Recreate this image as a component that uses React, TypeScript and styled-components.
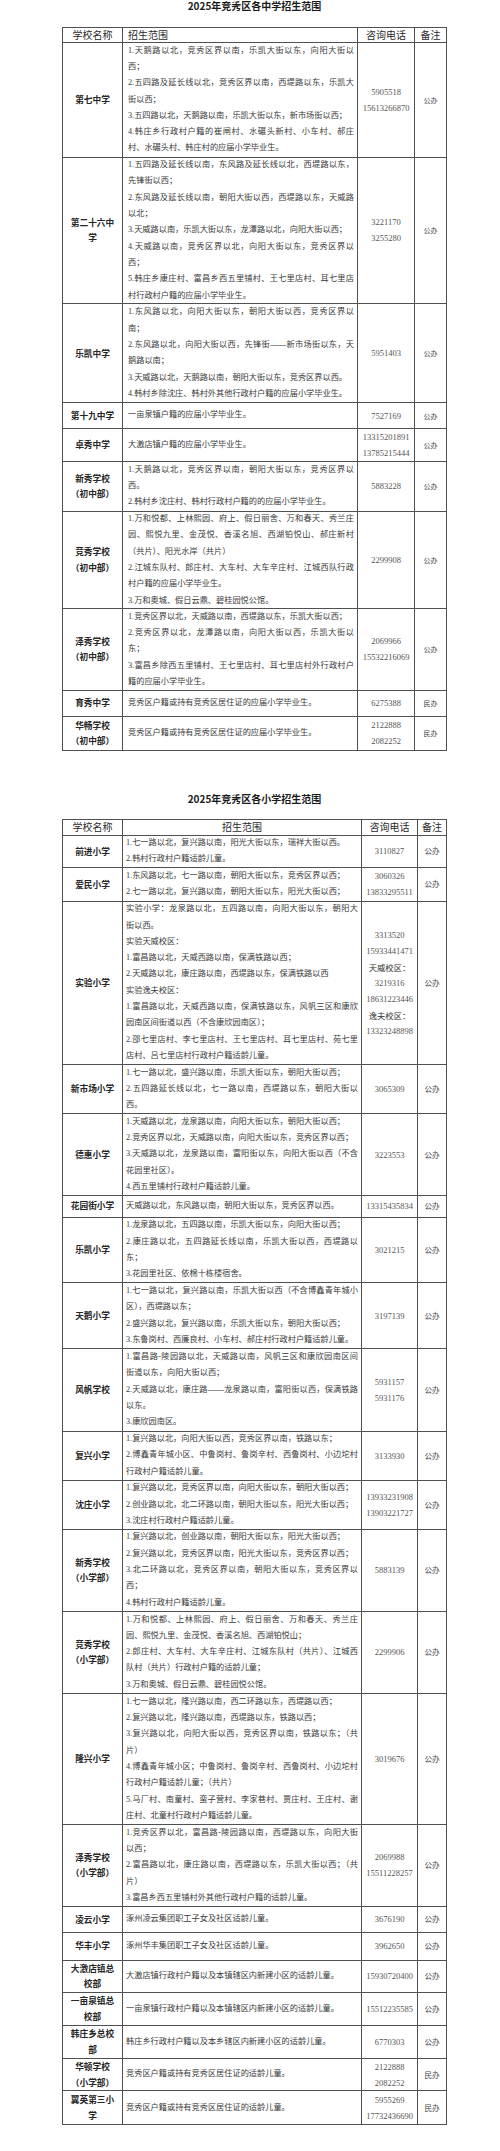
import React from "react";
import styled, { createGlobalStyle } from "styled-components";

const GlobalStyle = createGlobalStyle`
  html, body { margin: 0; padding: 0; background: #fff; }
  body { font-family: "Noto Sans CJK SC", sans-serif; }
`;

type RowData = {
  name: string[];
  scope: string[][];
  phones: string[];
  note: string;
  h: number;
};

type TableSpec = {
  cols: string;
  headH: number;
  scopeHeadLeft: boolean;
  padL: number;
  padR: number;
  noteSize: number;
  rows: RowData[];
};

const Page = styled.div`
  width: 500px;
  box-sizing: border-box;
  padding: 0 53px 0 62px;
  display: flex;
  flex-direction: column;
`;

const Title = styled.h2<{ $mt: number; $mb: number }>`
  margin: ${(p) => p.$mt}px 0 ${(p) => p.$mb}px;
  font: 700 10px/12px "Noto Sans CJK SC", sans-serif;
  color: #1a1a1a;
  text-align: center;
`;

const Table = styled.div`
  border-top: 1px solid #505050;
  border-left: 1px solid #505050;
  display: flex;
  flex-direction: column;
`;

const Row = styled.div<{ $cols: string; $h: number }>`
  display: grid;
  grid-template-columns: ${(p) => p.$cols};
  height: ${(p) => p.$h}px;
`;

const Cell = styled.div`
  box-sizing: border-box;
  border-right: 1px solid #505050;
  border-bottom: 1px solid #505050;
  display: flex;
  flex-direction: column;
  justify-content: center;
  min-width: 0;
  overflow: hidden;
`;

const HeadCell = styled(Cell)<{ $left?: boolean; $padL?: number }>`
  align-items: ${(p) => (p.$left ? "flex-start" : "center")};
  padding-left: ${(p) => (p.$left ? p.$padL : 0)}px;
  font: 400 10px/14px "Noto Sans CJK SC", sans-serif;
  color: #2a2a2a;
`;

const NameCell = styled(Cell)`
  align-items: center;
  text-align: center;
  font: 700 8.7px/15.5px "Noto Sans CJK SC", sans-serif;
  color: #262626;
`;

const ScopeCell = styled(Cell)<{ $padL: number; $padR: number }>`
  align-items: stretch;
  padding: 0 ${(p) => p.$padR}px 0 ${(p) => p.$padL}px;
  font: 400 8.2px/16.3px "Liberation Serif", "Noto Sans CJK SC", serif;
  color: #3a3a3a;
`;

const Line = styled.div<{ $full: boolean }>`
  white-space: nowrap;
  text-align: justify;
  text-align-last: ${(p) => (p.$full ? "justify" : "left")};
`;

const PhoneCell = styled(Cell)`
  align-items: center;
  font: 400 8.5px/16px "Liberation Serif", serif;
  color: #555;
`;

const Phone = styled.div<{ $label: boolean }>`
  font-family: ${(p) =>
    p.$label ? '"Noto Sans CJK SC", sans-serif' : '"Liberation Serif", serif'};
  font-size: ${(p) => (p.$label ? 8.3 : 8.5)}px;
  color: ${(p) => (p.$label ? "#333" : "#555")};
`;

const NoteCell = styled(Cell)<{ $size: number }>`
  align-items: center;
  font: 400 ${(p) => p.$size}px/12px "Noto Sans CJK SC", sans-serif;
  color: #444;
`;

const middle: RowData[] = [
  {
    name: ["第七中学"],
    h: 115,
    phones: ["5905518", "15613266870"],
    note: "公办",
    scope: [
      ["1.天鹅路以北，竞秀区界以南，乐凯大街以东，向阳大街以", "西；"],
      ["2.五四路及延长线以北，竞秀区界以南，西堤路以东，乐凯大", "街以西；"],
      ["3.五四路以北，天鹅路以南，乐凯大街以东，新市场街以西；"],
      ["4.韩庄乡行政村户籍的崔闸村、水碾头新村、小车村、郝庄", "村、水碾头村、韩庄村的应届小学毕业生。"],
    ],
  },
  {
    name: ["第二十六中", "学"],
    h: 146.6,
    phones: ["3221170", "3255280"],
    note: "公办",
    scope: [
      ["1.五四路及延长线以南，东风路及延长线以北，西堤路以东，", "先锋街以西；"],
      ["2.东风路及延长线以南，朝阳大街以西，西堤路以东，天威路", "以北；"],
      ["3.天威路以南，乐凯大街以东，龙潭路以北，向阳大街以西；"],
      ["4.天威路以南，竞秀区界以北，向阳大街以东，竞秀区界以", "西；"],
      ["5.韩庄乡康庄村、富昌乡西五里铺村、王七里店村、耳七里店", "村行政村户籍的应届小学毕业生。"],
    ],
  },
  {
    name: ["乐凯中学"],
    h: 99,
    phones: ["5951403"],
    note: "公办",
    scope: [
      ["1.东风路以北，向阳大街以东，朝阳大街以西，竞秀区界以", "南；"],
      ["2.东风路以北，向阳大街以西，先锋街——新市场街以东，天", "鹅路以南；"],
      ["3.天威路以北，天鹅路以南，朝阳大街以东，竞秀区界以西。"],
      ["4.韩村乡除沈庄、韩村外其他行政村户籍的应届小学毕业生。"],
    ],
  },
  {
    name: ["第十九中学"],
    h: 25.7,
    phones: ["7527169"],
    note: "公办",
    scope: [["一亩泉镇户籍的应届小学毕业生。"]],
  },
  {
    name: ["卓秀中学"],
    h: 33,
    phones: ["13315201891", "13785215444"],
    note: "公办",
    scope: [["大激店镇户籍的应届小学毕业生。"]],
  },
  {
    name: ["新秀学校", "（初中部）"],
    h: 49.7,
    phones: ["5883228"],
    note: "公办",
    scope: [
      ["1.天鹅路以北，竞秀区界以南，朝阳大街以东，竞秀区界以", "西。"],
      ["2.韩村乡沈庄村、韩村行政村户籍的的应届小学毕业生。"],
    ],
  },
  {
    name: ["竞秀学校", "（初中部）"],
    h: 97.6,
    phones: ["2299908"],
    note: "公办",
    scope: [
      [
        "1.万和悦都、上林熙园、府上、假日丽舍、万和春天、秀兰庄",
        "园、熙悦九里、金茂悦、香溪名旭、西湖铂悦山、郝庄新村",
        "（共片）、阳光水岸（共片）",
      ],
      ["2.江城东队村、郎庄村、大车村、大车辛庄村、江城西队行政", "村户籍的应届小学毕业生。"],
      ["3.万和奥城、假日云鼎、碧桂园悦公馆。"],
    ],
  },
  {
    name: ["泽秀学校", "（初中部）"],
    h: 81.4,
    phones: ["2069966", "15532216069"],
    note: "公办",
    scope: [
      ["1.竞秀区界以北，天威路以南，西堤路以东，乐凯大街以西；"],
      ["2.竞秀区界以北，龙潭路以南，向阳大街以西，乐凯大街以", "东；"],
      ["3.富昌乡除西五里铺村、王七里店村、耳七里店村外行政村户", "籍的应届小学毕业生。"],
    ],
  },
  {
    name: ["育秀中学"],
    h: 26,
    phones: ["6275388"],
    note: "民办",
    scope: [["竞秀区户籍或持有竞秀区居住证的应届小学毕业生。"]],
  },
  {
    name: ["华畅学校", "（初中部）"],
    h: 34,
    phones: ["2122888", "2082252"],
    note: "民办",
    scope: [["竞秀区户籍或持有竞秀区居住证的应届小学毕业生。"]],
  },
];

const primary: RowData[] = [
  {
    name: ["前进小学"],
    h: 32.6,
    phones: ["3110827"],
    note: "公办",
    scope: [["1.七一路以北，复兴路以南，阳光大街以东，瑞祥大街以西。"], ["2.韩村行政村户籍适龄儿童。"]],
  },
  {
    name: ["爱民小学"],
    h: 33.4,
    phones: ["3060326", "13833295511"],
    note: "公办",
    scope: [
      ["1.东风路以北，七一路以南，朝阳大街以东，竞秀区界以西；"],
      ["2.七一路以北，复兴路以南，朝阳大街以东，阳光大街以西；"],
    ],
  },
  {
    name: ["实验小学"],
    h: 163.3,
    phones: ["3313520", "15933441471", "天威校区：", "3219316", "18631223446", "逸夫校区：", "13323248898"],
    note: "公办",
    scope: [
      ["实验小学：龙泉路以北，五四路以南，向阳大街以东，朝阳大", "街以西。"],
      ["实验天威校区："],
      ["1.富昌路以北，天威西路以南，保满铁路以西；"],
      ["2.天威路以北，康庄路以南，西堤路以东，保满铁路以西"],
      ["实验逸夫校区："],
      ["1.富昌路以北，天威西路以南，保满铁路以东，风帆三区和康欣", "园南区间街道以西（不含康欣园南区）；"],
      ["2.邵七里店村、李七里店村、王七里店村、耳七里店村、苑七里", "店村、吕七里店村行政村户籍适龄儿童。"],
    ],
  },
  {
    name: ["新市场小学"],
    h: 49.3,
    phones: ["3065309"],
    note: "公办",
    scope: [
      ["1.七一路以北，盛兴路以南，乐凯大街以东，朝阳大街以西；"],
      ["2.五四路延长线以北，七一路以南，西堤路以东，朝阳大街以", "西。"],
    ],
  },
  {
    name: ["德惠小学"],
    h: 81.7,
    phones: ["3223553"],
    note: "公办",
    scope: [
      ["1.天威路以北，龙泉路以南，向阳大街以东，朝阳大街以西；"],
      ["2.竞秀区界以北，天威路以南，向阳大街以东，竞秀区界以西；"],
      ["3.天威路以北，龙泉路以南，富阳街以东，向阳大街以西（不含", "花园里社区）。"],
      ["4.西五里铺村行政村户籍适龄儿童。"],
    ],
  },
  {
    name: ["花园街小学"],
    h: 21.7,
    phones: ["13315435834"],
    note: "公办",
    scope: [["天威路以北，东风路以南，朝阳大街以东，竞秀区界以西。"]],
  },
  {
    name: ["乐凯小学"],
    h: 65.6,
    phones: ["3021215"],
    note: "公办",
    scope: [
      ["1.龙泉路以北，五四路以南，乐凯大街以东，向阳大街以西；"],
      ["2.康庄路以北，五四路延长线以南，乐凯大街以西，西堤路以", "东；"],
      ["3.花园里社区、依棉十栋楼宿舍。"],
    ],
  },
  {
    name: ["天鹅小学"],
    h: 65.7,
    phones: ["3197139"],
    note: "公办",
    scope: [
      ["1.七一路以北，复兴路以南，乐凯大街以西（不含博鑫青年城小", "区），西堤路以东；"],
      ["2.盛兴路以北，复兴路以南，乐凯大街以东，朝阳大街以西；"],
      ["3.东鲁岗村、西廉良村、小车村、郝庄村行政村户籍适龄儿童。"],
    ],
  },
  {
    name: ["风帆学校"],
    h: 82.7,
    phones: ["5931157", "5931176"],
    note: "公办",
    scope: [
      ["1.富昌路-陵园路以北，天威路以南，风帆三区和康欣园南区间", "街道以东，向阳大街以西；"],
      ["2.天威路以北，康庄路——龙泉路以南，富阳街以西，保满铁路", "以东。"],
      ["3.康欣园南区。"],
    ],
  },
  {
    name: ["复兴小学"],
    h: 49,
    phones: ["3133930"],
    note: "公办",
    scope: [
      ["1.复兴路以北，向阳大街以西，竞秀区界以南，铁路以东；"],
      ["2.博鑫青年城小区、中鲁岗村、鲁岗辛村、西鲁岗村、小边坨村", "行政村户籍适龄儿童。"],
    ],
  },
  {
    name: ["沈庄小学"],
    h: 49.3,
    phones: ["13933231908", "13903221727"],
    note: "公办",
    scope: [
      ["1.复兴路以北，竞秀区界以南，向阳大街以东，朝阳大街以西；"],
      ["2.创业路以北，北二环路以南，朝阳大街以东，阳光大街以西；"],
      ["3.沈庄村行政村户籍适龄儿童。"],
    ],
  },
  {
    name: ["新秀学校", "（小学部）"],
    h: 81.7,
    phones: ["5883139"],
    note: "公办",
    scope: [
      ["1.复兴路以北，创业路以南，朝阳大街以东，阳光大街以西；"],
      ["2.复兴路以北，竞秀区界以南，阳光大街以东，竞秀区界以西；"],
      ["3.北二环路以北，竞秀区界以南，朝阳大街以东，竞秀区界以", "西；"],
      ["4.韩村行政村户籍适龄儿童。"],
    ],
  },
  {
    name: ["竞秀学校", "（小学部）"],
    h: 82.6,
    phones: ["2299906"],
    note: "公办",
    scope: [
      ["1.万和悦都、上林熙园、府上、假日丽舍、万和春天、秀兰庄", "园、熙悦九里、金茂悦、香溪名旭、西湖铂悦山；"],
      ["2.郎庄村、大车村、大车辛庄村、江城东队村（共片）、江城西", "队村（共片）行政村户籍的适龄儿童；"],
      ["3.万和奥城、假日云鼎、碧桂园悦公馆。"],
    ],
  },
  {
    name: ["隆兴小学"],
    h: 130.7,
    phones: ["3019676"],
    note: "公办",
    scope: [
      ["1.七一路以北，隆兴路以南，西二环路以东，西堤路以西；"],
      ["2.复兴路以北，隆兴路以南，西堤路以东，铁路以西；"],
      ["3.复兴路以北，向阳大街以西，竞秀区界以南，铁路以东；（共", "片）"],
      ["4.博鑫青年城小区；中鲁岗村、鲁岗辛村、西鲁岗村、小边坨村", "行政村户籍适龄儿童；（共片）"],
      ["5.马厂村、南童村、蛮子营村、李家巷村、贾庄村、王庄村、谢", "庄村、北童村行政村户籍适龄儿童。"],
    ],
  },
  {
    name: ["泽秀学校", "（小学部）"],
    h: 82.3,
    phones: ["2069988", "15511228257"],
    note: "公办",
    scope: [
      ["1.竞秀区界以北，富昌路-陵园路以南，西堤路以东，向阳大街", "以西；"],
      ["2.富昌路以北，康庄路以南，西堤路以东，乐凯大街以西；（共", "片）"],
      ["3.富昌乡西五里铺村外其他行政村户籍的适龄儿童。"],
    ],
  },
  {
    name: ["凌云小学"],
    h: 25.4,
    phones: ["3676190"],
    note: "公办",
    scope: [["涿州凌云集团职工子女及社区适龄儿童。"]],
  },
  {
    name: ["华丰小学"],
    h: 28.3,
    phones: ["3962650"],
    note: "公办",
    scope: [["涿州华丰集团职工子女及社区适龄儿童。"]],
  },
  {
    name: ["大激店镇总", "校部"],
    h: 32.3,
    phones: ["15930720400"],
    note: "公办",
    scope: [["大激店镇行政村户籍以及本镇辖区内新建小区的适龄儿童。"]],
  },
  {
    name: ["一亩泉镇总", "校部"],
    h: 32.7,
    phones: ["15512235585"],
    note: "公办",
    scope: [["一亩泉镇行政村户籍以及本镇辖区内新建小区的适龄儿童。"]],
  },
  {
    name: ["韩庄乡总校", "部"],
    h: 33,
    phones: ["6770303"],
    note: "公办",
    scope: [["韩庄乡行政村户籍以及本乡辖区内新建小区的适龄儿童。"]],
  },
  {
    name: ["华顿学校", "（小学部）"],
    h: 32.7,
    phones: ["2122888", "2082252"],
    note: "民办",
    scope: [["竞秀区户籍或持有竞秀区居住证的适龄儿童。"]],
  },
  {
    name: ["翼英第三小", "学"],
    h: 34,
    phones: ["5955269", "17732436690"],
    note: "民办",
    scope: [["竞秀区户籍或持有竞秀区居住证的适龄儿童。"]],
  },
];

const middleSpec: TableSpec = {
  cols: "60px 235px 57px 32px",
  headH: 15,
  scopeHeadLeft: true,
  padL: 5,
  padR: 3,
  noteSize: 7,
  rows: middle,
};

const primarySpec: TableSpec = {
  cols: "60px 239px 56px 29px",
  headH: 15.4,
  scopeHeadLeft: false,
  padL: 3,
  padR: 3,
  noteSize: 7.6,
  rows: primary,
};

function EnrollTable({ spec }: { spec: TableSpec }) {
  return (
    <Table>
      <Row $cols={spec.cols} $h={spec.headH}>
        <HeadCell>学校名称</HeadCell>
        <HeadCell $left={spec.scopeHeadLeft} $padL={spec.padL}>
          招生范围
        </HeadCell>
        <HeadCell>咨询电话</HeadCell>
        <HeadCell>备注</HeadCell>
      </Row>
      {spec.rows.map((r, i) => (
        <Row key={i} $cols={spec.cols} $h={r.h}>
          <NameCell>
            {r.name.map((n, j) => (
              <div key={j}>{n}</div>
            ))}
          </NameCell>
          <ScopeCell $padL={spec.padL} $padR={spec.padR}>
            {r.scope.map((para, j) =>
              para.map((ln, k) => (
                <Line key={`${j}-${k}`} $full={k < para.length - 1}>
                  {ln}
                </Line>
              ))
            )}
          </ScopeCell>
          <PhoneCell>
            {r.phones.map((p, j) => (
              <Phone key={j} $label={/[^0-9]/.test(p)}>
                {p}
              </Phone>
            ))}
          </PhoneCell>
          <NoteCell $size={spec.noteSize}>{r.note}</NoteCell>
        </Row>
      ))}
    </Table>
  );
}

export default function App() {
  return (
    <>
      <GlobalStyle />
      <Page>
        <Title $mt={0} $mb={14.7}>
          2025年竞秀区各中学招生范围
        </Title>
        <EnrollTable spec={middleSpec} />
        <Title $mt={42} $mb={14.6}>
          2025年竞秀区各小学招生范围
        </Title>
        <EnrollTable spec={primarySpec} />
      </Page>
    </>
  );
}
